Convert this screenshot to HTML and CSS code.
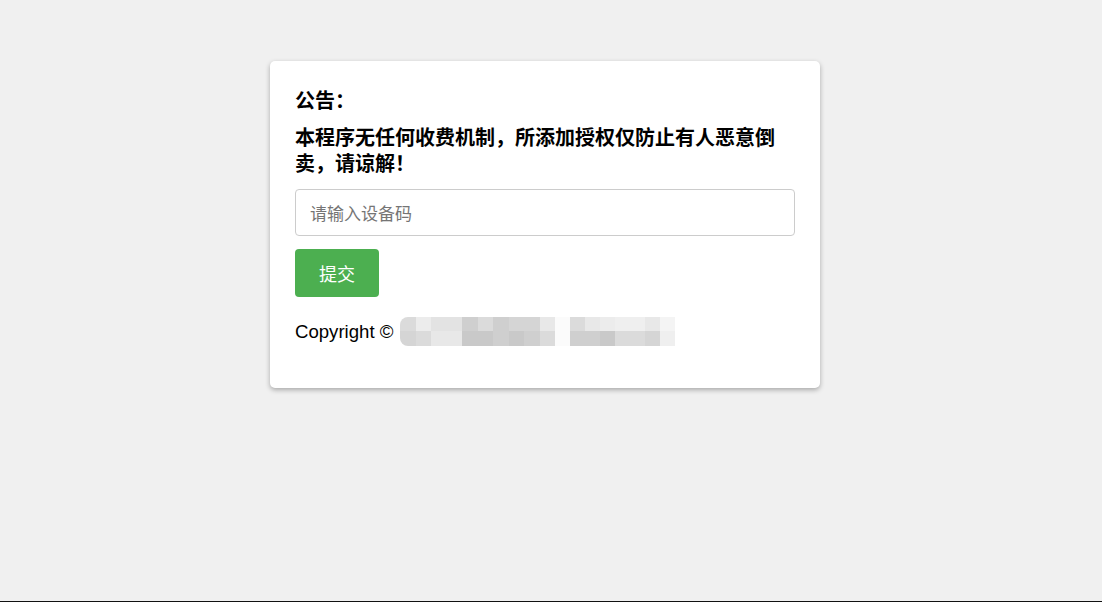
FILE: index.html
```html
<!DOCTYPE html>
<html lang="zh-CN">
<head>
<meta charset="utf-8">
<title>公告</title>
<link rel="stylesheet" href="styles.css">
</head>
<body>
<div class="page">
  <div class="card">
    <h3 class="title">公告：</h3>
    <p class="notice">本程序无任何收费机制，所添加授权仅防止有人恶意倒卖，请谅解！</p>
    <input class="code-input" type="text" placeholder="请输入设备码">
    <button class="submit" type="button">提交</button>
    <div class="copyright">
      <span class="copy-text">Copyright ©</span>
      <div class="mosaic" aria-hidden="true">
        <i class="m first s4"></i><i class="m s7"></i><i class="m s5"></i><i class="m s5"></i><i class="m s2"></i><i class="m s4"></i><i class="m s2"></i><i class="m s3"></i><i class="m s3"></i><i class="m s6"></i><i class="m gap"></i><i class="m s4"></i><i class="m s6"></i><i class="m s7"></i><i class="m s8"></i><i class="m s8"></i><i class="m s6"></i><i class="m s9"></i>
        <i class="m first-b s3"></i><i class="m s4"></i><i class="m s6"></i><i class="m s6"></i><i class="m s1"></i><i class="m s1"></i><i class="m s2"></i><i class="m s1"></i><i class="m s2"></i><i class="m s4"></i><i class="m gap"></i><i class="m s2"></i><i class="m s2"></i><i class="m s1"></i><i class="m s4"></i><i class="m s4"></i><i class="m s3"></i><i class="m s8"></i>
      </div>
    </div>
  </div>
</div>
</body>
</html>
```
FILE: styles.css
```css
html, body {
  margin: 0;
  padding: 0;
}
body {
  background: #f0f0f0;
  font-family: "Liberation Sans", "Noto Sans CJK SC", Arial, sans-serif;
  color: #000;
}
.page {
  box-sizing: border-box;
  height: 100vh;
  padding: 61px 12px 0 0;
  border-bottom: 1px solid #111;
}
.card {
  box-sizing: border-box;
  width: 550px;
  margin: 0 auto;
  background: #fff;
  border-radius: 5px;
  box-shadow: 0 2px 5px rgba(0, 0, 0, 0.3);
  padding: 26px 25px 25px;
}
.title {
  margin: 0;
  font-family: "Noto Sans CJK SC", sans-serif;
  font-size: 20px;
  line-height: 26px;
  font-weight: 700;
}
.notice {
  margin: 11px 0 0;
  max-width: 490px;
  font-family: "Noto Sans CJK SC", sans-serif;
  font-size: 20px;
  line-height: 26px;
  font-weight: 700;
}
.code-input {
  display: block;
  box-sizing: border-box;
  width: 100%;
  height: 47px;
  margin: 13px 0 0;
  padding: 0 14px;
  border: 1px solid #cccccc;
  border-radius: 4px;
  font-family: "Noto Sans CJK SC", sans-serif;
  font-size: 17px;
  color: #333;
  background: #fff;
  outline: none;
}
.code-input::placeholder {
  color: #757575;
}
.submit {
  display: block;
  box-sizing: border-box;
  height: 48px;
  width: 84px;
  margin: 13px 0 0;
  padding: 0;
  border: none;
  border-radius: 4px;
  background: #4caf50;
  color: #fff;
  font-family: "Noto Sans CJK SC", sans-serif;
  font-size: 18px;
  cursor: pointer;
}
.copyright {
  display: flex;
  align-items: center;
  gap: 7px;
  height: 29px;
  margin: 20px 0 17px;
}
.copy-text {
  font-size: 18.6px;
  line-height: 29px;
}
.mosaic {
  display: grid;
  grid-template-columns: repeat(10, 15.5px) 15px repeat(7, 15px);
  grid-template-rows: 14px 15px;
}
.m {
  display: block;
}
.m.first { border-top-left-radius: 8px; }
.m.first-b { border-bottom-left-radius: 8px; }
.s1 { background: #c9c9c9; }
.s2 { background: #cfcfcf; }
.s3 { background: #d5d5d5; }
.s4 { background: #dbdbdb; }
.s5 { background: #e3e3e3; }
.s6 { background: #e8e8e8; }
.s7 { background: #ececec; }
.s8 { background: #efefef; }
.s9 { background: #f4f4f4; }
.gap { background: #fbfbfb; }
```
